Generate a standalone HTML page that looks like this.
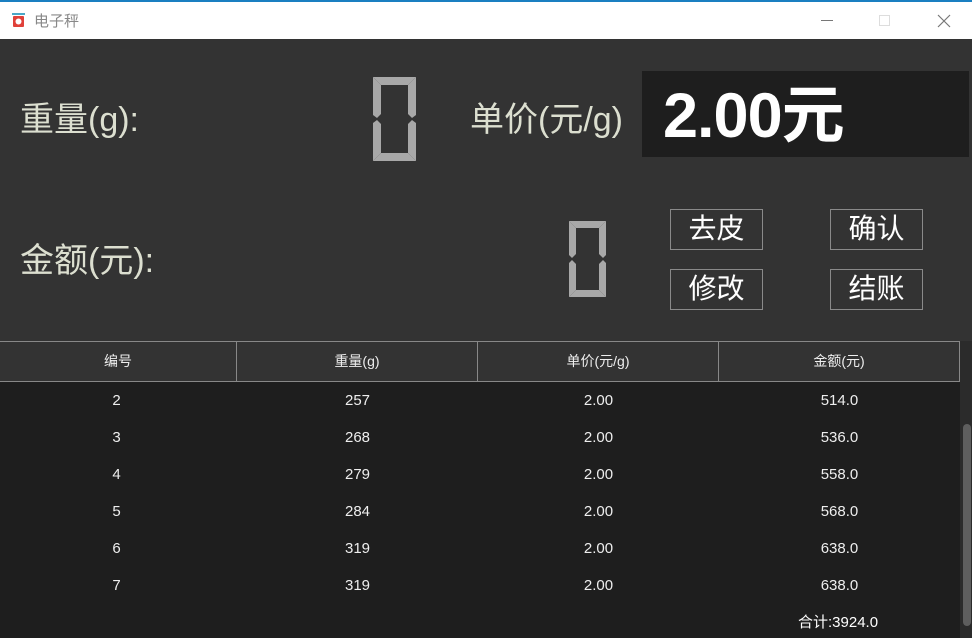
<!DOCTYPE html>
<html><head><meta charset="utf-8"><style>
*{margin:0;padding:0;box-sizing:border-box}
body{width:972px;height:638px;overflow:hidden;background:#333;font-family:"Liberation Sans","Noto Sans CJK SC",sans-serif;position:relative}
.a{position:absolute}
.title{left:0;top:0;width:972px;height:39px;background:#fff;border-top:2px solid #1a7fc1}
.lbl{color:#dcdfd0;font-size:34px;white-space:nowrap}
.btn{width:93px;height:41px;border:1px solid #8a8a8a;color:#fff;font-size:28px;text-align:center;line-height:38px}
.hdr{top:341px;left:0;width:960px;height:41px;background:#333;border-top:1px solid #888;border-bottom:1px solid #888}
.hc{position:absolute;top:0;height:39px;border-right:1px solid #888;color:#eee;font-size:14px;text-align:center;line-height:38px}
.body{top:382px;left:0;width:960px;height:256px;background:#1e1e1e}
.cell{position:absolute;width:241px;text-align:center;color:#eee;font-size:15px}
</style></head><body>
<div class="a title">
 <svg class="a" style="left:11px;top:11px" width="15" height="15" viewBox="0 0 15 15"><rect x="1" y="0" width="13" height="2" fill="#4aa8c8"/><rect x="2" y="3" width="11" height="11" rx="1" fill="#e0413a"/><circle cx="7.5" cy="8.5" r="3" fill="#fff"/></svg>
 <div class="a" style="left:34px;top:8px;font-size:15px;color:#888">电子秤</div>
 <div class="a" style="left:821px;top:18px;width:12px;height:1px;background:#777"></div>
 <div class="a" style="left:879px;top:13px;width:11px;height:11px;border:1px solid #ddd"></div>
 <svg class="a" style="left:937px;top:12px" width="14" height="14"><path d="M1 1L13 13M13 1L1 13" stroke="#777" stroke-width="1.2"/></svg>
</div>
<div class="a lbl" style="left:20px;top:92px">重量(g):</div>
<div class="a lbl" style="left:470px;top:92px">单价(元/g)</div>
<div class="a lbl" style="left:20px;top:233px">金额(元):</div>
<div class="a" style="left:642px;top:71px;width:327px;height:86px;background:#1e1e1e;color:#fff;font-weight:bold;font-size:63px;line-height:90px;padding-left:21px;letter-spacing:-1px">2.00元</div>
<svg class="a" style="left:373px;top:77px" width="43" height="84" viewBox="0 0 43 84"><g fill="#a8a8a8"><polygon points="0,0 43,0 35,8 8,8"/><polygon points="0,84 43,84 35,76 8,76"/><polygon points="0,0 8,8 8,37 4,41 0,38"/><polygon points="0,84 8,76 8,47 4,43 0,46"/><polygon points="43,0 35,8 35,37 39,41 43,38"/><polygon points="43,84 35,76 35,47 39,43 43,46"/></g></svg>
<svg class="a" style="left:569px;top:221px" width="37" height="76" viewBox="0 0 37 76"><g fill="#a8a8a8"><polygon points="0,0 37,0 30,7 7,7"/><polygon points="0,76 37,76 30,69 7,69"/><polygon points="0,0 7,7 7,33 3,37 0,34"/><polygon points="0,76 7,69 7,43 3,39 0,42"/><polygon points="37,0 30,7 30,33 34,37 37,34"/><polygon points="37,76 30,69 30,43 34,39 37,42"/></g></svg>
<div class="a btn" style="left:670px;top:209px">去皮</div>
<div class="a btn" style="left:830px;top:209px">确认</div>
<div class="a btn" style="left:670px;top:269px">修改</div>
<div class="a btn" style="left:830px;top:269px">结账</div>
<div class="a hdr">
 <div class="hc" style="left:0;width:237px">编号</div>
 <div class="hc" style="left:237px;width:241px">重量(g)</div>
 <div class="hc" style="left:478px;width:241px">单价(元/g)</div>
 <div class="hc" style="left:719px;width:241px">金额(元)</div>
</div>
<div class="a body">
 <div class="cell" style="left:-4px;top:10px">2</div><div class="cell" style="left:237px;top:10px">257</div><div class="cell" style="left:478px;top:10px">2.00</div><div class="cell" style="left:719px;top:10px">514.0</div>
 <div class="cell" style="left:-4px;top:47px">3</div><div class="cell" style="left:237px;top:47px">268</div><div class="cell" style="left:478px;top:47px">2.00</div><div class="cell" style="left:719px;top:47px">536.0</div>
 <div class="cell" style="left:-4px;top:84px">4</div><div class="cell" style="left:237px;top:84px">279</div><div class="cell" style="left:478px;top:84px">2.00</div><div class="cell" style="left:719px;top:84px">558.0</div>
 <div class="cell" style="left:-4px;top:121px">5</div><div class="cell" style="left:237px;top:121px">284</div><div class="cell" style="left:478px;top:121px">2.00</div><div class="cell" style="left:719px;top:121px">568.0</div>
 <div class="cell" style="left:-4px;top:158px">6</div><div class="cell" style="left:237px;top:158px">319</div><div class="cell" style="left:478px;top:158px">2.00</div><div class="cell" style="left:719px;top:158px">638.0</div>
 <div class="cell" style="left:-4px;top:195px">7</div><div class="cell" style="left:237px;top:195px">319</div><div class="cell" style="left:478px;top:195px">2.00</div><div class="cell" style="left:719px;top:195px">638.0</div>
 <div class="a" style="left:798px;top:229px;color:#fff;font-size:15px">合计:3924.0</div>
</div>
<div class="a" style="left:960px;top:341px;width:12px;height:297px;background:#2b2b2b"></div>
<div class="a" style="left:963px;top:424px;width:8px;height:202px;background:#5e5e5e;border-radius:4px"></div>
</body></html>
